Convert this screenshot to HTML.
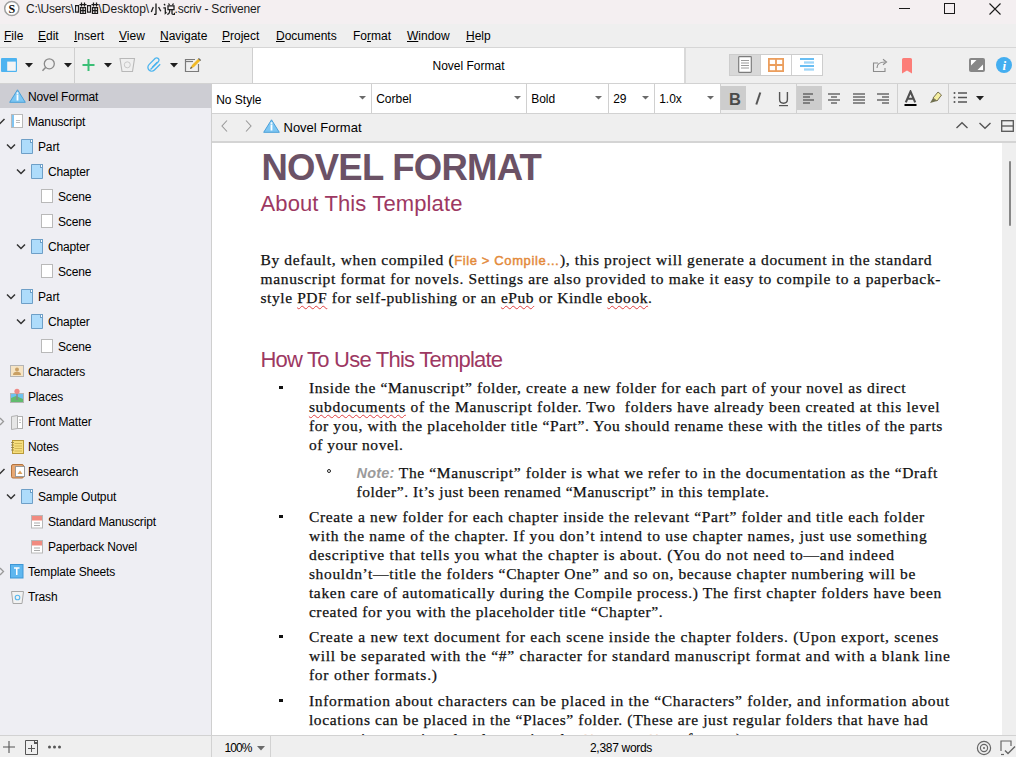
<!DOCTYPE html>
<html><head><meta charset="utf-8">
<style>
*{margin:0;padding:0;box-sizing:border-box}
html,body{width:1016px;height:757px;overflow:hidden;background:#efefef;font-family:"Liberation Sans",sans-serif;font-size:12px;color:#000}
.a{position:absolute}
.tx{white-space:nowrap}
.tx u{text-decoration:underline;text-underline-offset:1px;text-decoration-thickness:1px}
#title{left:0;top:0;width:1016px;height:24px;background:#f4eff1}
#menu{left:0;top:24px;width:1016px;height:24px;background:#efefef;border-bottom:1px solid #d6d6d6}
#tb{left:0;top:48px;width:1016px;height:36px;background:#efefef;border-bottom:1px solid #d2d2d2}
#binder{left:0;top:84px;width:212px;height:651px;background:#eeeef3;border-right:1px solid #cfcfcf}
#sel{left:0;top:84px;width:211px;height:24px;background:#cdcdd3}
#fmt{left:212px;top:84px;width:804px;height:30px;background:#efefef;border-bottom:1px solid #d2d2d2}
#nav{left:212px;top:114px;width:804px;height:29px;background:#efefef;border-bottom:2px solid #d4d4d4}
#editor{left:212px;top:143px;width:790px;height:592px;background:#fff}
#sbar{left:1002px;top:143px;width:14px;height:592px;background:#efefef}
#status{left:0;top:735px;width:1016px;height:22px;background:#efefef;border-top:1px solid #d2d2d2}
.bl{position:absolute;white-space:nowrap;font-family:"Liberation Serif",serif;font-size:15.5px;line-height:16px;color:#111;margin-top:-12.4px;-webkit-text-stroke:0.25px #111}
.orng{font-family:"Liberation Sans",sans-serif;color:#e38a3b;font-size:13px;-webkit-text-stroke:0.45px #e38a3b}
.note{font-family:"Liberation Sans",sans-serif;font-style:italic;font-weight:bold;color:#9b9b9b;-webkit-text-stroke:0;letter-spacing:0.2px;font-size:14.5px}
u.sp{text-decoration:underline wavy #e04040;text-decoration-thickness:1px;text-underline-offset:1.5px}
</style></head><body>
<div id="title" class="a"></div>
<svg class="a" style="left:3px;top:0px" width="18" height="18" viewBox="0 0 18 18"><circle cx="8.8" cy="8.5" r="7.1" fill="#fff" stroke="#a0a0a0" stroke-width="1.5"/><text x="8.8" y="12.6" font-family="Liberation Serif" font-weight="bold" font-size="12" text-anchor="middle" fill="#111">S</text></svg>
<div class="a tx" style="left:26px;top:2.64px;font-size:12px;line-height:12px;color:#1b1b1b;font-family:'Liberation Sans',sans-serif;letter-spacing:-0.25px">C:\Users\</div>
<svg class="a" style="left:75px;top:2px" width="12" height="12" viewBox="0 0 12 12"><path d="M0.5 3.5H3.5V10H0.5Z" fill="none" stroke="#1b1b1b" stroke-width="1.25"/><path d="M4.5 2.5H11.5M6.5 0.5V4.5M9.5 0.5V4.5" stroke="#1b1b1b" stroke-width="1.25"/><path d="M5.5 5.5H10.5V11.5H5.5Z M8 5.5V11.5M5.5 8.5H10.5" fill="none" stroke="#1b1b1b" stroke-width="1.25"/></svg>
<svg class="a" style="left:86.5px;top:2px" width="12" height="12" viewBox="0 0 12 12"><path d="M0.5 3.5H3.5V10H0.5Z" fill="none" stroke="#1b1b1b" stroke-width="1.25"/><path d="M4.5 2.5H11.5M6.5 0.5V4.5M9.5 0.5V4.5" stroke="#1b1b1b" stroke-width="1.25"/><path d="M5.5 5.5H10.5V11.5H5.5Z M8 5.5V11.5M5.5 8.5H10.5" fill="none" stroke="#1b1b1b" stroke-width="1.25"/></svg>
<div class="a tx" style="left:98.5px;top:2.64px;font-size:12px;line-height:12px;color:#1b1b1b;font-family:'Liberation Sans',sans-serif;">\Desktop\</div>
<svg class="a" style="left:149.5px;top:2.5px" width="12" height="12" viewBox="0 0 12 12"><path d="M6 0.5V10.8Q6 11.5 5.2 11.5H4" fill="none" stroke="#1b1b1b" stroke-width="1.3"/><path d="M3.3 4L1.3 9" stroke="#1b1b1b" stroke-width="1.3"/><path d="M8.6 4L10.8 8.3" stroke="#1b1b1b" stroke-width="1.3"/></svg>
<svg class="a" style="left:162.5px;top:2.5px" width="12" height="12" viewBox="0 0 12 12"><path d="M1 1L2.2 2.4" stroke="#1b1b1b" stroke-width="1.25"/><path d="M0.3 4.8H2.3V10.3L3.5 9.2" fill="none" stroke="#1b1b1b" stroke-width="1.25"/><path d="M5.5 0.5L6.5 2M10.5 0.5L9.5 2" stroke="#1b1b1b" stroke-width="1.25"/><path d="M5 2.8H11V6.5H5Z" fill="none" stroke="#1b1b1b" stroke-width="1.25"/><path d="M6.7 6.5V8.5Q6.5 10.5 4.3 11.5" fill="none" stroke="#1b1b1b" stroke-width="1.25"/><path d="M9 6.5V10.5Q9 11.3 10 11.3H11.6V9.8" fill="none" stroke="#1b1b1b" stroke-width="1.25"/></svg>
<div class="a tx" style="left:174.5px;top:2.64px;font-size:12px;line-height:12px;color:#1b1b1b;font-family:'Liberation Sans',sans-serif;letter-spacing:-0.2px">.scriv - Scrivener</div>
<svg class="a" style="left:897px;top:1px" width="16" height="14" viewBox="0 0 16 14"><line x1="2" y1="7.5" x2="13" y2="7.5" stroke="#1a1a1a" stroke-width="1"/></svg>
<svg class="a" style="left:941px;top:0px" width="16" height="16" viewBox="0 0 16 16"><rect x="3.5" y="3.5" width="10" height="10" fill="none" stroke="#1a1a1a" stroke-width="1"/></svg>
<svg class="a" style="left:986px;top:0px" width="18" height="18" viewBox="0 0 18 18"><path d="M3.5 3.5L14.5 14.5M14.5 3.5L3.5 14.5" stroke="#1a1a1a" stroke-width="1.1"/></svg>
<div id="menu" class="a"></div>
<div class="a tx" style="left:4px;top:29.74px;font-size:12px;line-height:12px;color:#000;font-family:'Liberation Sans',sans-serif;white-space:nowrap"><u>F</u>ile</div>
<div class="a tx" style="left:38px;top:29.74px;font-size:12px;line-height:12px;color:#000;font-family:'Liberation Sans',sans-serif;white-space:nowrap"><u>E</u>dit</div>
<div class="a tx" style="left:74px;top:29.74px;font-size:12px;line-height:12px;color:#000;font-family:'Liberation Sans',sans-serif;white-space:nowrap"><u>I</u>nsert</div>
<div class="a tx" style="left:119px;top:29.74px;font-size:12px;line-height:12px;color:#000;font-family:'Liberation Sans',sans-serif;white-space:nowrap"><u>V</u>iew</div>
<div class="a tx" style="left:160px;top:29.74px;font-size:12px;line-height:12px;color:#000;font-family:'Liberation Sans',sans-serif;white-space:nowrap"><u>N</u>avigate</div>
<div class="a tx" style="left:222px;top:29.74px;font-size:12px;line-height:12px;color:#000;font-family:'Liberation Sans',sans-serif;white-space:nowrap"><u>P</u>roject</div>
<div class="a tx" style="left:276px;top:29.74px;font-size:12px;line-height:12px;color:#000;font-family:'Liberation Sans',sans-serif;white-space:nowrap"><u>D</u>ocuments</div>
<div class="a tx" style="left:353px;top:29.74px;font-size:12px;line-height:12px;color:#000;font-family:'Liberation Sans',sans-serif;white-space:nowrap">Fo<u>r</u>mat</div>
<div class="a tx" style="left:407px;top:29.74px;font-size:12px;line-height:12px;color:#000;font-family:'Liberation Sans',sans-serif;white-space:nowrap"><u>W</u>indow</div>
<div class="a tx" style="left:466px;top:29.74px;font-size:12px;line-height:12px;color:#000;font-family:'Liberation Sans',sans-serif;white-space:nowrap"><u>H</u>elp</div>
<div id="tb" class="a"></div>
<div class="a" style="left:74px;top:48px;width:1px;height:35px;background:#cfcfcf"></div>
<div class="a" style="left:252px;top:48px;width:1px;height:35px;background:#cfcfcf"></div>
<div class="a" style="left:253px;top:48px;width:431px;height:35px;background:#fff"></div>
<div class="a" style="left:684px;top:48px;width:2px;height:35px;background:#d9d9d9"></div>
<div class="a tx" style="left:432.5px;top:59.54px;font-size:12px;line-height:12px;color:#000;font-family:'Liberation Sans',sans-serif;">Novel Format</div>
<svg class="a" style="left:1px;top:58px" width="16" height="14" viewBox="0 0 16 14"><rect x="0" y="0" width="16" height="14" rx="1" fill="#4db3f0"/><rect x="6.2" y="3.6" width="8.6" height="9.2" fill="#f4f4f4"/></svg>
<svg class="a" style="left:25px;top:62.5px" width="8" height="5" viewBox="0 0 8 5"><path d="M0 0H8L4 4.5Z" fill="#1e1e1e"/></svg>
<svg class="a" style="left:41px;top:57px" width="15" height="16" viewBox="0 0 15 16"><circle cx="8.3" cy="6.8" r="5" fill="none" stroke="#8a8a8a" stroke-width="1.3"/><path d="M4.8 10.3L1.5 13.8" stroke="#8a8a8a" stroke-width="1.5"/></svg>
<svg class="a" style="left:64px;top:62.5px" width="8" height="5" viewBox="0 0 8 5"><path d="M0 0H8L4 4.5Z" fill="#1e1e1e"/></svg>
<svg class="a" style="left:82px;top:58px" width="13" height="14" viewBox="0 0 13 14"><path d="M6.5 1V13M0.5 7H12.5" stroke="#3bbf76" stroke-width="2"/></svg>
<svg class="a" style="left:103.5px;top:62.5px" width="8" height="5" viewBox="0 0 8 5"><path d="M0 0H8L4 4.5Z" fill="#1e1e1e"/></svg>
<svg class="a" style="left:119px;top:57px" width="17" height="16" viewBox="0 0 17 16"><path d="M1 1.5H15.5L13.5 14.5H3Z" fill="none" stroke="#b8b8b8" stroke-width="1.1"/><circle cx="8.3" cy="7.8" r="3" fill="none" stroke="#c8c8c8" stroke-width="1"/></svg>
<svg class="a" style="left:147px;top:57px" width="16" height="16" viewBox="0 0 16 16"><path d="M3.5 12.5L11.5 4.5A2.3 2.3 0 0 0 8.3 1.3L2 7.6A3.8 3.8 0 0 0 7.4 13L13.2 7.2" fill="none" stroke="#4ab4ef" stroke-width="1.3"/><path d="M5.3 10.2L10.2 5.3" stroke="#4ab4ef" stroke-width="1.3"/></svg>
<svg class="a" style="left:169.5px;top:62.5px" width="8" height="5" viewBox="0 0 8 5"><path d="M0 0H8L4 4.5Z" fill="#1e1e1e"/></svg>
<svg class="a" style="left:184px;top:57px" width="18" height="16" viewBox="0 0 18 16"><path d="M11 2.5H1.5V14.5H14.5V7" fill="none" stroke="#7a7a7a" stroke-width="1.2"/><path d="M1.5 4.5H9" stroke="#7a7a7a" stroke-width="1.2"/><path d="M6 12L8 8L14.5 1.5L16.5 3.5L10 10Z" fill="#f0b927"/><path d="M6 12L7 9.5L8.5 11Z" fill="#555"/><path d="M14.5 1.3L16.7 3.5" stroke="#666" stroke-width="1.2"/></svg>
<div class="a" style="left:729px;top:54px;width:94px;height:22px;background:#fff;border:1px solid #cdcdcd"></div>
<div class="a" style="left:730px;top:55px;width:30px;height:20px;background:#d8d8d8"></div>
<div class="a" style="left:760px;top:55px;width:1px;height:20px;background:#d0d0d0"></div>
<div class="a" style="left:791px;top:55px;width:1px;height:20px;background:#d0d0d0"></div>
<svg class="a" style="left:738px;top:56px" width="14" height="17" viewBox="0 0 14 17"><rect x="0.7" y="0.7" width="12.6" height="15.6" rx="0.5" fill="#fff" stroke="#7d7d7d" stroke-width="1.2"/><path d="M3 4.5H11M3 7H11M3 9.5H11M3 12H11" stroke="#9a9a9a" stroke-width="1"/></svg>
<svg class="a" style="left:768px;top:58px" width="16" height="14" viewBox="0 0 16 14"><rect x="0.9" y="0.9" width="14.2" height="12.2" fill="none" stroke="#eb9e5d" stroke-width="1.8"/><path d="M8 1V13M1 7H15" stroke="#eb9e5d" stroke-width="1.8"/></svg>
<svg class="a" style="left:800px;top:57px" width="14" height="16" viewBox="0 0 14 16"><path d="M0 2H14M4 5.5H14M0 9H14M4 12.5H14" stroke="#39a9ef" stroke-width="1.5"/><path d="M4 5.5H14M4 12.5H14" stroke="#9fd6f8" stroke-width="1.5"/></svg>
<svg class="a" style="left:872px;top:57px" width="17" height="16" viewBox="0 0 17 16"><path d="M6 6H1.5V14.5H13V11" fill="none" stroke="#8c8c8c" stroke-width="1.1"/><path d="M5 11C5 7 8 5 13 5" fill="none" stroke="#8c8c8c" stroke-width="1.1"/><path d="M11 2.3L14.5 5L11 7.7" fill="none" stroke="#8c8c8c" stroke-width="1.1"/></svg>
<svg class="a" style="left:902px;top:58px" width="11" height="17" viewBox="0 0 11 17"><path d="M0 1.5Q0 0 1.5 0H8.5Q10 0 10 1.5V15.5L5 12.5L0 15.5Z" fill="#fc7d78"/></svg>
<svg class="a" style="left:969px;top:58px" width="16" height="14" viewBox="0 0 16 14"><rect x="0" y="0" width="16" height="14" rx="2" fill="#878787"/><path d="M2 2H7.5L2 7.5Z" fill="#fff"/><path d="M14 6.5V12H8.5Z" fill="#fff"/></svg>
<svg class="a" style="left:995px;top:56px" width="18" height="18" viewBox="0 0 18 18"><circle cx="9" cy="9" r="8" fill="#44aef0"/><text x="9.3" y="13.6" font-family="Liberation Serif" font-style="italic" font-weight="bold" font-size="13" text-anchor="middle" fill="#fff">i</text></svg>
<div id="binder" class="a"></div>
<div id="sel" class="a"></div>
<svg class="a" style="left:9px;top:89px" width="17" height="14" viewBox="0 0 17 14"><path d="M8.5 0.8L16.3 13.3H0.7Z" fill="#7cc6f3" stroke="#4a9fd8" stroke-width="1" stroke-linejoin="round"/><rect x="7.6" y="5.5" width="1.8" height="6" fill="#fff"/><rect x="7.6" y="3.3" width="1.8" height="1.6" fill="#fff"/></svg>
<div class="a tx" style="left:28px;top:90.64px;font-size:12px;line-height:12px;color:#000;font-family:'Liberation Sans',sans-serif;white-space:nowrap;letter-spacing:-0.15px">Novel Format</div>
<svg class="a" style="left:11px;top:114px" width="13" height="15" viewBox="0 0 13 15"><rect x="0.5" y="0.5" width="11" height="13" fill="#fff" stroke="#b9b9b9"/><rect x="1" y="1" width="2" height="12" fill="#7fc4f2"/><path d="M5 6.5H9M5 8.5H9" stroke="#bbb" stroke-width="1"/></svg>
<svg class="a" style="left:0px;top:118px" width="6" height="7" viewBox="0 0 6 7"><path d="M-4 1.5L0 5.5L4.5 1" fill="none" stroke="#333" stroke-width="1.5"/></svg>
<div class="a tx" style="left:28px;top:115.64px;font-size:12px;line-height:12px;color:#000;font-family:'Liberation Sans',sans-serif;white-space:nowrap;letter-spacing:-0.15px">Manuscript</div>
<svg class="a" style="left:21px;top:139px" width="13" height="15" viewBox="0 0 13 15"><path d="M0.5 0.5H9.5V2.5H11.5V14.5H0.5Z" fill="#aedcfb" stroke="#6e9fc7" stroke-width="1"/><rect x="9.5" y="0.5" width="2" height="3" fill="#fff" stroke="#6e9fc7" stroke-width="1"/></svg>
<svg class="a" style="left:6px;top:143px" width="10" height="7" viewBox="0 0 10 7"><path d="M1 1.5L5 5.5L9 1.5" fill="none" stroke="#333" stroke-width="1.5"/></svg>
<div class="a tx" style="left:38px;top:140.64px;font-size:12px;line-height:12px;color:#000;font-family:'Liberation Sans',sans-serif;white-space:nowrap;letter-spacing:-0.15px">Part</div>
<svg class="a" style="left:31px;top:164px" width="13" height="15" viewBox="0 0 13 15"><path d="M0.5 0.5H9.5V2.5H11.5V14.5H0.5Z" fill="#aedcfb" stroke="#6e9fc7" stroke-width="1"/><rect x="9.5" y="0.5" width="2" height="3" fill="#fff" stroke="#6e9fc7" stroke-width="1"/></svg>
<svg class="a" style="left:16px;top:168px" width="10" height="7" viewBox="0 0 10 7"><path d="M1 1.5L5 5.5L9 1.5" fill="none" stroke="#333" stroke-width="1.5"/></svg>
<div class="a tx" style="left:48px;top:165.64px;font-size:12px;line-height:12px;color:#000;font-family:'Liberation Sans',sans-serif;white-space:nowrap;letter-spacing:-0.15px">Chapter</div>
<svg class="a" style="left:41px;top:189px" width="13" height="15" viewBox="0 0 13 15"><rect x="0.5" y="0.5" width="11" height="13" fill="#fff" stroke="#b9b9b9" stroke-width="1"/></svg>
<div class="a tx" style="left:58px;top:190.64px;font-size:12px;line-height:12px;color:#000;font-family:'Liberation Sans',sans-serif;white-space:nowrap;letter-spacing:-0.15px">Scene</div>
<svg class="a" style="left:41px;top:214px" width="13" height="15" viewBox="0 0 13 15"><rect x="0.5" y="0.5" width="11" height="13" fill="#fff" stroke="#b9b9b9" stroke-width="1"/></svg>
<div class="a tx" style="left:58px;top:215.64px;font-size:12px;line-height:12px;color:#000;font-family:'Liberation Sans',sans-serif;white-space:nowrap;letter-spacing:-0.15px">Scene</div>
<svg class="a" style="left:31px;top:239px" width="13" height="15" viewBox="0 0 13 15"><path d="M0.5 0.5H9.5V2.5H11.5V14.5H0.5Z" fill="#aedcfb" stroke="#6e9fc7" stroke-width="1"/><rect x="9.5" y="0.5" width="2" height="3" fill="#fff" stroke="#6e9fc7" stroke-width="1"/></svg>
<svg class="a" style="left:16px;top:243px" width="10" height="7" viewBox="0 0 10 7"><path d="M1 1.5L5 5.5L9 1.5" fill="none" stroke="#333" stroke-width="1.5"/></svg>
<div class="a tx" style="left:48px;top:240.64px;font-size:12px;line-height:12px;color:#000;font-family:'Liberation Sans',sans-serif;white-space:nowrap;letter-spacing:-0.15px">Chapter</div>
<svg class="a" style="left:41px;top:264px" width="13" height="15" viewBox="0 0 13 15"><rect x="0.5" y="0.5" width="11" height="13" fill="#fff" stroke="#b9b9b9" stroke-width="1"/></svg>
<div class="a tx" style="left:58px;top:265.64px;font-size:12px;line-height:12px;color:#000;font-family:'Liberation Sans',sans-serif;white-space:nowrap;letter-spacing:-0.15px">Scene</div>
<svg class="a" style="left:21px;top:289px" width="13" height="15" viewBox="0 0 13 15"><path d="M0.5 0.5H9.5V2.5H11.5V14.5H0.5Z" fill="#aedcfb" stroke="#6e9fc7" stroke-width="1"/><rect x="9.5" y="0.5" width="2" height="3" fill="#fff" stroke="#6e9fc7" stroke-width="1"/></svg>
<svg class="a" style="left:6px;top:293px" width="10" height="7" viewBox="0 0 10 7"><path d="M1 1.5L5 5.5L9 1.5" fill="none" stroke="#333" stroke-width="1.5"/></svg>
<div class="a tx" style="left:38px;top:290.64px;font-size:12px;line-height:12px;color:#000;font-family:'Liberation Sans',sans-serif;white-space:nowrap;letter-spacing:-0.15px">Part</div>
<svg class="a" style="left:31px;top:314px" width="13" height="15" viewBox="0 0 13 15"><path d="M0.5 0.5H9.5V2.5H11.5V14.5H0.5Z" fill="#aedcfb" stroke="#6e9fc7" stroke-width="1"/><rect x="9.5" y="0.5" width="2" height="3" fill="#fff" stroke="#6e9fc7" stroke-width="1"/></svg>
<svg class="a" style="left:16px;top:318px" width="10" height="7" viewBox="0 0 10 7"><path d="M1 1.5L5 5.5L9 1.5" fill="none" stroke="#333" stroke-width="1.5"/></svg>
<div class="a tx" style="left:48px;top:315.64px;font-size:12px;line-height:12px;color:#000;font-family:'Liberation Sans',sans-serif;white-space:nowrap;letter-spacing:-0.15px">Chapter</div>
<svg class="a" style="left:41px;top:339px" width="13" height="15" viewBox="0 0 13 15"><rect x="0.5" y="0.5" width="11" height="13" fill="#fff" stroke="#b9b9b9" stroke-width="1"/></svg>
<div class="a tx" style="left:58px;top:340.64px;font-size:12px;line-height:12px;color:#000;font-family:'Liberation Sans',sans-serif;white-space:nowrap;letter-spacing:-0.15px">Scene</div>
<svg class="a" style="left:10px;top:365px" width="15" height="12" viewBox="0 0 15 12"><rect x="0.5" y="0.5" width="13" height="11" fill="#f6e4c4" stroke="#b5b5b5"/><circle cx="7" cy="4.5" r="2" fill="#c9a064"/><path d="M3 10Q3 6.8 7 6.8Q11 6.8 11 10Z" fill="#c9a064"/></svg>
<div class="a tx" style="left:28px;top:365.64px;font-size:12px;line-height:12px;color:#000;font-family:'Liberation Sans',sans-serif;white-space:nowrap;letter-spacing:-0.15px">Characters</div>
<svg class="a" style="left:10px;top:388px" width="15" height="16" viewBox="0 0 15 16"><rect x="0.5" y="5.5" width="13" height="9" fill="#6cc2f0" stroke="#b5b5b5"/><path d="M1 10L6 8L13 11V14H1Z" fill="#62bb6e"/><path d="M7 5V12" stroke="#888" stroke-width="1.5"/><circle cx="7" cy="3.3" r="2.6" fill="#ee8a86"/></svg>
<div class="a tx" style="left:28px;top:390.64px;font-size:12px;line-height:12px;color:#000;font-family:'Liberation Sans',sans-serif;white-space:nowrap;letter-spacing:-0.15px">Places</div>
<svg class="a" style="left:11px;top:415px" width="13" height="15" viewBox="0 0 13 15"><path d="M0.5 1.5L6.5 0.5V13.5L0.5 14.5Z" fill="#e6e6e6" stroke="#b0b0b0"/><rect x="6.5" y="1.5" width="5" height="12" fill="#fff" stroke="#b0b0b0"/><path d="M8 5H10M8 7.5H10" stroke="#bbb"/></svg>
<svg class="a" style="left:0px;top:417px" width="5" height="9" viewBox="0 0 5 9"><path d="M0 1L3.5 4.5L0 8" fill="none" stroke="#999" stroke-width="1.3"/></svg>
<div class="a tx" style="left:28px;top:415.64px;font-size:12px;line-height:12px;color:#000;font-family:'Liberation Sans',sans-serif;white-space:nowrap;letter-spacing:-0.15px">Front Matter</div>
<svg class="a" style="left:11px;top:440px" width="13" height="15" viewBox="0 0 13 15"><rect x="1.5" y="0.5" width="11" height="13" fill="#f7df7d" stroke="#b89a3c"/><path d="M3.5 3.5H11M3.5 6H11M3.5 8.5H11M3.5 11H11" stroke="#c9ad4e" stroke-width="0.8"/><path d="M0 2.5H3M0 5H3M0 7.5H3M0 10H3" stroke="#8a7a4a" stroke-width="0.8"/></svg>
<div class="a tx" style="left:28px;top:440.64px;font-size:12px;line-height:12px;color:#000;font-family:'Liberation Sans',sans-serif;white-space:nowrap;letter-spacing:-0.15px">Notes</div>
<svg class="a" style="left:11px;top:464px" width="15" height="15" viewBox="0 0 15 15"><rect x="0.5" y="0.5" width="12" height="13.5" rx="1.5" fill="#e8a873" stroke="#b2733f"/><rect x="4.5" y="2.5" width="9" height="10" fill="#fff" stroke="#999"/><path d="M6.5 10L9 6.5L11.5 10Z" fill="#d9a15f"/></svg>
<svg class="a" style="left:0px;top:468px" width="6" height="7" viewBox="0 0 6 7"><path d="M-4 1.5L0 5.5L4.5 1" fill="none" stroke="#333" stroke-width="1.5"/></svg>
<div class="a tx" style="left:28px;top:465.64px;font-size:12px;line-height:12px;color:#000;font-family:'Liberation Sans',sans-serif;white-space:nowrap;letter-spacing:-0.15px">Research</div>
<svg class="a" style="left:21px;top:489px" width="13" height="15" viewBox="0 0 13 15"><path d="M0.5 0.5H9.5V2.5H11.5V14.5H0.5Z" fill="#aedcfb" stroke="#6e9fc7" stroke-width="1"/><rect x="9.5" y="0.5" width="2" height="3" fill="#fff" stroke="#6e9fc7" stroke-width="1"/></svg>
<svg class="a" style="left:6px;top:493px" width="10" height="7" viewBox="0 0 10 7"><path d="M1 1.5L5 5.5L9 1.5" fill="none" stroke="#333" stroke-width="1.5"/></svg>
<div class="a tx" style="left:38px;top:490.64px;font-size:12px;line-height:12px;color:#000;font-family:'Liberation Sans',sans-serif;white-space:nowrap;letter-spacing:-0.15px">Sample Output</div>
<svg class="a" style="left:31px;top:515px" width="13" height="14" viewBox="0 0 13 14"><rect x="0.5" y="0.5" width="11" height="12.5" fill="#fff" stroke="#b8b8b8"/><rect x="1" y="1" width="10" height="4.5" fill="#f18b80"/><path d="M3 8H9M3 10.5H9" stroke="#aaa"/></svg>
<div class="a tx" style="left:48px;top:515.64px;font-size:12px;line-height:12px;color:#000;font-family:'Liberation Sans',sans-serif;white-space:nowrap;letter-spacing:-0.15px">Standard Manuscript</div>
<svg class="a" style="left:31px;top:540px" width="13" height="14" viewBox="0 0 13 14"><rect x="0.5" y="0.5" width="11" height="12.5" fill="#fff" stroke="#b8b8b8"/><rect x="1" y="1" width="10" height="4.5" fill="#f18b80"/><path d="M3 8H9M3 10.5H9" stroke="#aaa"/></svg>
<div class="a tx" style="left:48px;top:540.64px;font-size:12px;line-height:12px;color:#000;font-family:'Liberation Sans',sans-serif;white-space:nowrap;letter-spacing:-0.15px">Paperback Novel</div>
<svg class="a" style="left:10px;top:564px" width="14" height="15" viewBox="0 0 14 15"><rect x="0.5" y="0.5" width="12.5" height="13.5" fill="#5fb7ef" stroke="#3e97d6"/><path d="M4 4H9.5M6.75 4V11" stroke="#fff" stroke-width="1.5"/></svg>
<svg class="a" style="left:0px;top:567px" width="5" height="9" viewBox="0 0 5 9"><path d="M0 1L3.5 4.5L0 8" fill="none" stroke="#999" stroke-width="1.3"/></svg>
<div class="a tx" style="left:28px;top:565.64px;font-size:12px;line-height:12px;color:#000;font-family:'Liberation Sans',sans-serif;white-space:nowrap;letter-spacing:-0.15px">Template Sheets</div>
<svg class="a" style="left:11px;top:591px" width="13" height="13" viewBox="0 0 13 13"><path d="M0.5 0.5H12.5L11 12.5H2Z" fill="#f2f2f2" stroke="#a8a8a8"/><circle cx="6.5" cy="6.5" r="2.3" fill="none" stroke="#5ab8ee" stroke-width="1.1"/></svg>
<div class="a tx" style="left:28px;top:590.64px;font-size:12px;line-height:12px;color:#000;font-family:'Liberation Sans',sans-serif;white-space:nowrap;letter-spacing:-0.15px">Trash</div>
<div id="fmt" class="a"></div>
<div class="a" style="left:212px;top:84px;width:159px;height:29px;background:#fff"></div>
<div class="a tx" style="left:216.2px;top:94.14px;font-size:12px;line-height:12px;color:#000;font-family:'Liberation Sans',sans-serif;">No Style</div>
<svg class="a" style="left:358.5px;top:95.5px" width="7" height="4" viewBox="0 0 7 4"><path d="M0 0H7L3.5 3.6Z" fill="#6a6a6a"/></svg>
<div class="a" style="left:371px;top:84px;width:1px;height:29px;background:#d0d0d0"></div>
<div class="a" style="left:372px;top:84px;width:154px;height:29px;background:#fff"></div>
<div class="a tx" style="left:376.2px;top:93.14px;font-size:12px;line-height:12px;color:#000;font-family:'Liberation Sans',sans-serif;">Corbel</div>
<svg class="a" style="left:513.5px;top:95.5px" width="7" height="4" viewBox="0 0 7 4"><path d="M0 0H7L3.5 3.6Z" fill="#6a6a6a"/></svg>
<div class="a" style="left:526px;top:84px;width:1px;height:29px;background:#d0d0d0"></div>
<div class="a" style="left:527px;top:84px;width:81px;height:29px;background:#fff"></div>
<div class="a tx" style="left:531.2px;top:93.14px;font-size:12px;line-height:12px;color:#000;font-family:'Liberation Sans',sans-serif;">Bold</div>
<svg class="a" style="left:594.5px;top:95.5px" width="7" height="4" viewBox="0 0 7 4"><path d="M0 0H7L3.5 3.6Z" fill="#6a6a6a"/></svg>
<div class="a" style="left:608px;top:84px;width:1px;height:29px;background:#d0d0d0"></div>
<div class="a" style="left:609px;top:84px;width:45px;height:29px;background:#fff"></div>
<div class="a tx" style="left:613.2px;top:93.14px;font-size:12px;line-height:12px;color:#000;font-family:'Liberation Sans',sans-serif;">29</div>
<svg class="a" style="left:641.5px;top:95.5px" width="7" height="4" viewBox="0 0 7 4"><path d="M0 0H7L3.5 3.6Z" fill="#6a6a6a"/></svg>
<div class="a" style="left:654px;top:84px;width:1px;height:29px;background:#d0d0d0"></div>
<div class="a" style="left:655px;top:84px;width:65px;height:29px;background:#fff"></div>
<div class="a tx" style="left:659.2px;top:93.14px;font-size:12px;line-height:12px;color:#000;font-family:'Liberation Sans',sans-serif;">1.0x</div>
<svg class="a" style="left:706.5px;top:95.5px" width="7" height="4" viewBox="0 0 7 4"><path d="M0 0H7L3.5 3.6Z" fill="#6a6a6a"/></svg>
<div class="a" style="left:720px;top:84px;width:1px;height:29px;background:#d0d0d0"></div>
<div class="a" style="left:721px;top:86px;width:25px;height:24px;background:#cdcdcd"></div>
<div class="a" style="left:797px;top:86px;width:25px;height:24px;background:#cdcdcd"></div>
<div class="a" style="left:796px;top:84px;width:1px;height:29px;background:#d0d0d0"></div>
<div class="a" style="left:897px;top:84px;width:1px;height:29px;background:#d0d0d0"></div>
<div class="a" style="left:948px;top:84px;width:1px;height:29px;background:#d0d0d0"></div>
<div class="a tx" style="left:729px;top:91.03px;font-size:16.5px;line-height:16.5px;color:#4a4a4a;font-family:'Liberation Sans',sans-serif;font-weight:bold">B</div>
<svg class="a" style="left:754px;top:91px" width="8" height="15" viewBox="0 0 8 15"><path d="M6.3 1.5L2.3 13.5" stroke="#555" stroke-width="2"/></svg>
<svg class="a" style="left:778px;top:91px" width="12" height="17" viewBox="0 0 12 17"><path d="M1.6 1V8.5Q1.6 12.2 5.5 12.2Q9.4 12.2 9.4 8.5V1" fill="none" stroke="#555" stroke-width="1.4"/><path d="M1 14.6H10" stroke="#555" stroke-width="1.2"/></svg>
<svg class="a" style="left:803px;top:92px" width="14" height="14" viewBox="0 0 14 14"><path d="M0 2H10" stroke="#555" stroke-width="1.3"/><path d="M0 5H7" stroke="#555" stroke-width="1.3"/><path d="M0 8H11" stroke="#555" stroke-width="1.3"/><path d="M0 11H7" stroke="#555" stroke-width="1.3"/></svg>
<svg class="a" style="left:828px;top:92px" width="14" height="14" viewBox="0 0 14 14"><path d="M0 2H12" stroke="#555" stroke-width="1.3"/><path d="M3 5H9" stroke="#555" stroke-width="1.3"/><path d="M0 8H12" stroke="#555" stroke-width="1.3"/><path d="M3 11H9" stroke="#555" stroke-width="1.3"/></svg>
<svg class="a" style="left:853px;top:92px" width="14" height="14" viewBox="0 0 14 14"><path d="M0 2H12" stroke="#555" stroke-width="1.3"/><path d="M0 5H12" stroke="#555" stroke-width="1.3"/><path d="M0 8H12" stroke="#555" stroke-width="1.3"/><path d="M0 11H12" stroke="#555" stroke-width="1.3"/></svg>
<svg class="a" style="left:877px;top:92px" width="14" height="14" viewBox="0 0 14 14"><path d="M0 2H12" stroke="#555" stroke-width="1.3"/><path d="M5 5H12" stroke="#555" stroke-width="1.3"/><path d="M0 8H12" stroke="#555" stroke-width="1.3"/><path d="M5 11H12" stroke="#555" stroke-width="1.3"/></svg>
<svg class="a" style="left:903px;top:90px" width="15" height="18" viewBox="0 0 15 18"><path d="M2.8 12.3L7.5 1.5L12.2 12.3M4.5 8.8H10.5" fill="none" stroke="#505050" stroke-width="2.1"/><rect x="1.5" y="14" width="12" height="2" fill="#000"/></svg>
<svg class="a" style="left:928px;top:90px" width="15" height="15" viewBox="0 0 15 15"><path d="M2 13L5 8L9 11Z" fill="#707050"/><path d="M5 8L10 2L13.5 5L9 11Z" fill="#f4eea0" stroke="#777050" stroke-width="1"/></svg>
<svg class="a" style="left:953px;top:91px" width="16" height="13" viewBox="0 0 16 13"><circle cx="1.5" cy="2" r="1" fill="#555"/><circle cx="1.5" cy="6.5" r="1" fill="#555"/><circle cx="1.5" cy="11" r="1" fill="#555"/><path d="M5 2H14M5 6.5H14M5 11H14" stroke="#555" stroke-width="1.3"/></svg>
<svg class="a" style="left:976px;top:95.5px" width="8" height="5" viewBox="0 0 8 5"><path d="M0 0H8L4 4.5Z" fill="#222"/></svg>
<div id="nav" class="a"></div>
<svg class="a" style="left:220px;top:119px" width="9" height="14" viewBox="0 0 9 14"><path d="M7 1.5L2 7L7 12.5" fill="none" stroke="#999" stroke-width="1.1"/></svg>
<svg class="a" style="left:244px;top:119px" width="9" height="14" viewBox="0 0 9 14"><path d="M2 1.5L7 7L2 12.5" fill="none" stroke="#999" stroke-width="1.1"/></svg>
<svg class="a" style="left:263px;top:118.5px" width="17" height="14" viewBox="0 0 17 14"><path d="M8.5 0.8L16.3 13.3H0.7Z" fill="#7cc6f3" stroke="#4a9fd8" stroke-width="1" stroke-linejoin="round"/><rect x="7.6" y="5.5" width="1.8" height="6" fill="#fff"/><rect x="7.6" y="3.3" width="1.8" height="1.6" fill="#fff"/></svg>
<div class="a tx" style="left:283.5px;top:120.70px;font-size:13px;line-height:13px;color:#000;font-family:'Liberation Sans',sans-serif;">Novel Format</div>
<svg class="a" style="left:955px;top:121px" width="14" height="9" viewBox="0 0 14 9"><path d="M1.5 7L7 1.8L12.5 7" fill="none" stroke="#555" stroke-width="1.4"/></svg>
<svg class="a" style="left:978px;top:121px" width="14" height="9" viewBox="0 0 14 9"><path d="M1.5 2L7 7.2L12.5 2" fill="none" stroke="#555" stroke-width="1.4"/></svg>
<svg class="a" style="left:1001px;top:120px" width="13" height="12" viewBox="0 0 13 12"><rect x="0.7" y="0.7" width="11.6" height="10.6" fill="none" stroke="#555" stroke-width="1.3"/><path d="M1 6H12" stroke="#555" stroke-width="1.3"/></svg>
<div id="editor" class="a"></div>
<div id="sbar" class="a"></div>
<div class="a" style="left:1009px;top:161px;width:2px;height:65px;background:#878787;border-radius:1px"></div>
<div class="a" style="left:0;top:0;width:1002px;height:735px;overflow:hidden">
<div class="a tx" style="left:261.5px;top:150.30px;font-size:36.5px;line-height:36.5px;color:#6b5266;font-family:'Liberation Sans',sans-serif;font-weight:bold;letter-spacing:-0.75px;white-space:nowrap">NOVEL FORMAT</div>
<div class="a tx" style="left:260.5px;top:193.38px;font-size:22px;line-height:22px;color:#9d3862;font-family:'Liberation Sans',sans-serif;white-space:nowrap;letter-spacing:0.12px">About This Template</div>
<div class="a tx" style="left:260.5px;top:349.38px;font-size:22px;line-height:22px;color:#9d3862;font-family:'Liberation Sans',sans-serif;white-space:nowrap;letter-spacing:-0.78px">How To Use This Template</div>
<div class="a" style="left:279px;top:385.5px;width:3.5px;height:3.5px;background:#111"></div>
<div class="a" style="left:279px;top:514.5px;width:3.5px;height:3.5px;background:#111"></div>
<div class="a" style="left:279px;top:634.5px;width:3.5px;height:3.5px;background:#111"></div>
<div class="a" style="left:279px;top:698.5px;width:3.5px;height:3.5px;background:#111"></div>
<div class="a" style="left:326.5px;top:469px;width:4px;height:4px;border:1px solid #222;border-radius:50%"></div>
<div class="bl" id="b0" style="left:260.5px;top:264.7px;letter-spacing:0.621px">By default, when compiled (<span class="orng">File &gt; Compile…</span>), this project will generate a document in the standard</div>
<div class="bl" id="b1" style="left:260.5px;top:283.5px;letter-spacing:0.662px">manuscript format for novels. Settings are also provided to make it easy to compile to a paperback-</div>
<div class="bl" id="b2" style="left:260.5px;top:302.5px;letter-spacing:0.578px">style <u class="sp">PDF</u> for self-publishing or an <u class="sp">ePub</u> or Kindle <u class="sp">ebook</u>.</div>
<div class="bl" id="b3" style="left:308.9px;top:392.0px;letter-spacing:0.634px">Inside the “Manuscript” folder, create a new folder for each part of your novel as direct</div>
<div class="bl" id="b4" style="left:308.9px;top:411.0px;letter-spacing:0.695px"><u class="sp">subdocuments</u> of the Manuscript folder. Two&nbsp; folders have already been created at this level</div>
<div class="bl" id="b5" style="left:308.9px;top:430.0px;letter-spacing:0.619px">for you, with the placeholder title “Part”. You should rename these with the titles of the parts</div>
<div class="bl" id="b6" style="left:308.9px;top:449.0px;letter-spacing:0.517px">of your novel.</div>
<div class="bl" id="b7" style="left:356.5px;top:477.2px;letter-spacing:0.628px"><span class="note">Note:</span> The “Manuscript” folder is what we refer to in the documentation as the “Draft</div>
<div class="bl" id="b8" style="left:356.5px;top:496.0px;letter-spacing:0.538px">folder”. It’s just been renamed “Manuscript” in this template.</div>
<div class="bl" id="b9" style="left:308.9px;top:521.0px;letter-spacing:0.675px">Create a new folder for each chapter inside the relevant “Part” folder and title each folder</div>
<div class="bl" id="b10" style="left:308.9px;top:540.0px;letter-spacing:0.687px">with the name of the chapter. If you don’t intend to use chapter names, just use something</div>
<div class="bl" id="b11" style="left:308.9px;top:559.0px;letter-spacing:0.736px">descriptive that tells you what the chapter is about. (You do not need to—and indeed</div>
<div class="bl" id="b12" style="left:308.9px;top:578.0px;letter-spacing:0.651px">shouldn’t—title the folders “Chapter One” and so on, because chapter numbering will be</div>
<div class="bl" id="b13" style="left:308.9px;top:597.0px;letter-spacing:0.671px">taken care of automatically during the Compile process.) The first chapter folders have been</div>
<div class="bl" id="b14" style="left:308.9px;top:616.0px;letter-spacing:0.597px">created for you with the placeholder title “Chapter”.</div>
<div class="bl" id="b15" style="left:308.9px;top:641.0px;letter-spacing:0.728px">Create a new text document for each scene inside the chapter folders. (Upon export, scenes</div>
<div class="bl" id="b16" style="left:308.9px;top:660.0px;letter-spacing:0.712px">will be separated with the “#” character for standard manuscript format and with a blank line</div>
<div class="bl" id="b17" style="left:308.9px;top:679.0px;letter-spacing:0.780px">for other formats.)</div>
<div class="bl" id="b18" style="left:308.9px;top:705.0px;letter-spacing:0.708px">Information about characters can be placed in the “Characters” folder, and information about</div>
<div class="bl" id="b19" style="left:308.9px;top:724.0px;letter-spacing:0.636px">locations can be placed in the “Places” folder. (These are just regular folders that have had</div>
<div class="bl" id="b20" style="left:308.9px;top:743.0px;letter-spacing:0.500px">custom icons assigned and are using the <span class="orng">Character Sheet</span> format.)</div>
</div>
<div id="status" class="a"></div>
<div class="a" style="left:211px;top:735px;width:1px;height:22px;background:#d2d2d2"></div>
<div class="a" style="left:270px;top:736px;width:1px;height:21px;background:#d2d2d2"></div>
<div class="a tx" style="left:224.5px;top:741.84px;font-size:12px;line-height:12px;color:#000;font-family:'Liberation Sans',sans-serif;letter-spacing:-0.9px">100%</div>
<svg class="a" style="left:257px;top:746px" width="8" height="5" viewBox="0 0 8 5"><path d="M0 0H8L4 4.5Z" fill="#6a6a6a"/></svg>
<div class="a tx" style="left:590px;top:741.84px;font-size:12px;line-height:12px;color:#000;font-family:'Liberation Sans',sans-serif;letter-spacing:-0.3px">2,387 words</div>
<svg class="a" style="left:976px;top:740px" width="16" height="16" viewBox="0 0 16 16"><circle cx="8" cy="8" r="6.6" fill="none" stroke="#666" stroke-width="1.2"/><circle cx="8" cy="8" r="3.6" fill="none" stroke="#666" stroke-width="1.2"/><circle cx="8" cy="8" r="1" fill="#666"/></svg>
<svg class="a" style="left:1000px;top:740px" width="16" height="17" viewBox="0 0 16 17"><path d="M1 11V1H11V6" fill="none" stroke="#666" stroke-width="1.2"/><path d="M1 14.5H4" stroke="#666" stroke-width="1.2"/><path d="M5 10.5L8 13.5L15 6.5" fill="none" stroke="#666" stroke-width="1.4"/></svg>
<svg class="a" style="left:2px;top:740px" width="14" height="14" viewBox="0 0 14 14"><path d="M7 1V13M1 7H13" stroke="#555" stroke-width="1.1"/></svg>
<svg class="a" style="left:25px;top:740px" width="14" height="16" viewBox="0 0 14 16"><path d="M0.5 0.5H9.5V2.5H12.5V14.5H0.5Z" fill="none" stroke="#555"/><rect x="9.5" y="0.5" width="3" height="3" fill="none" stroke="#555"/><path d="M6.5 5V12M3 8.5H10" stroke="#555" stroke-width="1"/></svg>
<svg class="a" style="left:47px;top:744px" width="16" height="6" viewBox="0 0 16 6"><circle cx="2.5" cy="3" r="1.5" fill="#555"/><circle cx="7.5" cy="3" r="1.5" fill="#555"/><circle cx="12.5" cy="3" r="1.5" fill="#555"/></svg>
</body></html>
